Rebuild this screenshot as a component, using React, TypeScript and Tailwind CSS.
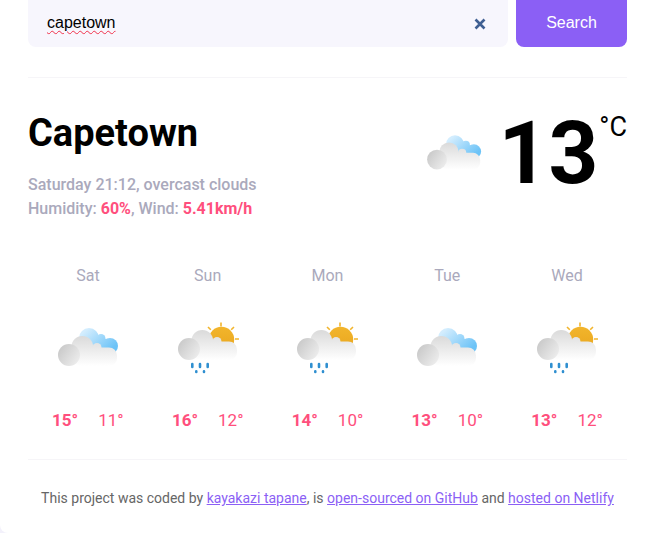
import * as React from 'react'

const forecast = [
  { day: 'Sat', icon: 'cloud', high: 15, low: 11 },
  { day: 'Sun', icon: 'rain', high: 16, low: 12 },
  { day: 'Mon', icon: 'rain', high: 14, low: 10 },
  { day: 'Tue', icon: 'cloud', high: 13, low: 10 },
  { day: 'Wed', icon: 'rain', high: 13, low: 12 },
]

function CloudFront({ id }: { id: string }) {
  return (
    <>
      <g fill={`url(#${id}-white)`}>
        <circle cx="24.3" cy="19.7" r="10.8" />
        <circle cx="39" cy="20.5" r="4.5" />
        <rect x="15" y="20.5" width="44" height="18.5" rx="8" />
      </g>
      <circle cx="11" cy="28" r="11" fill={`url(#${id}-gray)`} />
    </>
  )
}

function WeatherIcon({ id, icon, className }: { id: string; icon: string; className: string }) {
  return (
    <svg viewBox="0 0 62 60" className={className} fill="none">
      <defs>
        <linearGradient id={`${id}-blue`} gradientUnits="userSpaceOnUse" x1="30" y1="1" x2="52" y2="24">
          <stop offset="0" stopColor="#d3edfe" />
          <stop offset="1" stopColor="#6cc3f7" />
        </linearGradient>
        <linearGradient id={`${id}-white`} gradientUnits="userSpaceOnUse" x1="30" y1="9" x2="30" y2="39">
          <stop offset="0" stopColor="#dadada" />
          <stop offset="1" stopColor="#ffffff" />
        </linearGradient>
        <linearGradient id={`${id}-gray`} x1="0" y1="0.1" x2="1" y2="0.8">
          <stop offset="0" stopColor="#c6c6c6" />
          <stop offset="1" stopColor="#eeeeee" />
        </linearGradient>
        <linearGradient id={`${id}-sun`} x1="0" y1="0" x2="0" y2="1">
          <stop offset="0" stopColor="#f2b52c" />
          <stop offset="1" stopColor="#e8a51e" />
        </linearGradient>
      </defs>
      {icon === 'cloud' ? (
        <g transform="translate(0 6)">
          <g fill={`url(#${id}-blue)`}>
            <circle cx="31" cy="11" r="10" />
            <circle cx="43" cy="11.5" r="4.5" />
            <circle cx="52" cy="19" r="8" />
            <rect x="24" y="12" width="28" height="14" />
          </g>
          <CloudFront id={id} />
        </g>
      ) : (
        <g>
          <g stroke="#f2b52c" strokeWidth="1.6">
            <path d="M43 1.5v4M30 6l2.8 2.8M56 6l-2.8 2.8M57 18h4" />
          </g>
          <circle cx="43.5" cy="18.5" r="12.7" fill={`url(#${id}-sun)`} />
          <CloudFront id={id} />
          <g stroke="#2f8fd0" strokeWidth="2.6" strokeLinecap="round">
            <path d="M14.3 43v3M22 43v3M29.7 43v3M18.3 50.4v.6M26 50.4v.6" />
          </g>
        </g>
      )}
    </svg>
  )
}

export default function App() {
  return (
    <div className="h-[533px] w-[654px] overflow-hidden bg-[#f3f1fb]">
      <div className="h-full rounded-bl-lg bg-white pr-[27px] pl-[28px] font-['Roboto',sans-serif]">
        <form className="flex gap-2">
          <div className="flex h-[47px] w-[480px] items-center rounded-b-lg bg-[#f7f6fd] pr-[22px] pl-[19px]">
            <input
              defaultValue="capetown"
              spellCheck={false}
              className="-mt-[2px] w-full bg-transparent font-['Liberation_Sans',sans-serif] text-base text-black underline decoration-[#f0324b] decoration-wavy decoration-1 underline-offset-2 outline-none"
            />
            <svg viewBox="0 0 12 12" className="h-[12px] w-[12px] shrink-0" stroke="#3f5f92" strokeWidth="2.6">
              <path d="M1.5 1.5l9 9M10.5 1.5l-9 9" />
            </svg>
          </div>
          <button
            type="button"
            className="h-[47px] w-[111px] rounded-b-lg bg-[#8b5ff5] pb-[2px] font-['Liberation_Sans',sans-serif] text-base text-white"
          >
            Search
          </button>
        </form>

        <div className="mt-[30px] border-t border-[#f6f5f8]" />

        <section className="mt-[31px] flex justify-between">
          <div>
            <h1 className="text-[38px] leading-[48px] font-bold text-black">Capetown</h1>
            <p className="mt-[16px] text-base leading-6 font-medium text-[#aaa9bc]">Saturday 21:12, overcast clouds</p>
            <p className="text-base leading-6 font-medium text-[#aaa9bc]">
              Humidity: <span className="font-bold text-[#ff4f7d]">60%</span>, Wind:{' '}
              <span className="font-bold text-[#ff4f7d]">5.41km/h</span>
            </p>
          </div>
          <div className="flex items-start">
            <WeatherIcon id="main" icon="cloud" className="mt-[20px] mr-[15px] h-[54px] w-[56px]" />
            <span className="text-[87px] leading-[88px] font-bold text-black">13</span>
            <span className="mt-[2px] ml-[1px] text-[27px] leading-8 text-black">°C</span>
          </div>
        </section>

        <section className="mt-[43px] grid grid-cols-5">
          {forecast.map((f, i) => (
            <div key={f.day} className="flex flex-col items-center">
              <div className="text-base leading-6 text-[#aaa9bc]">{f.day}</div>
              <WeatherIcon id={`day${i}`} icon={f.icon} className="mt-[33px] ml-[2px] h-[60px] w-[62px]" />
              <div className="mt-[27px] flex gap-5 text-[17px] leading-6 text-[#ff4f7d]">
                <span className="font-bold">{f.high}°</span>
                <span>{f.low}°</span>
              </div>
            </div>
          ))}
        </section>

        <div className="mt-[27px] border-t border-[#f6f5f8]" />

        <footer className="mt-[28px] text-center text-sm leading-5 text-[#666666]">
          This project was coded by{' '}
          <a href="#" className="text-[#8b5ff5] underline">
            kayakazi tapane
          </a>
          , is{' '}
          <a href="#" className="text-[#8b5ff5] underline">
            open-sourced on GitHub
          </a>{' '}
          and{' '}
          <a href="#" className="text-[#8b5ff5] underline">
            hosted on Netlify
          </a>
        </footer>
      </div>
    </div>
  )
}
